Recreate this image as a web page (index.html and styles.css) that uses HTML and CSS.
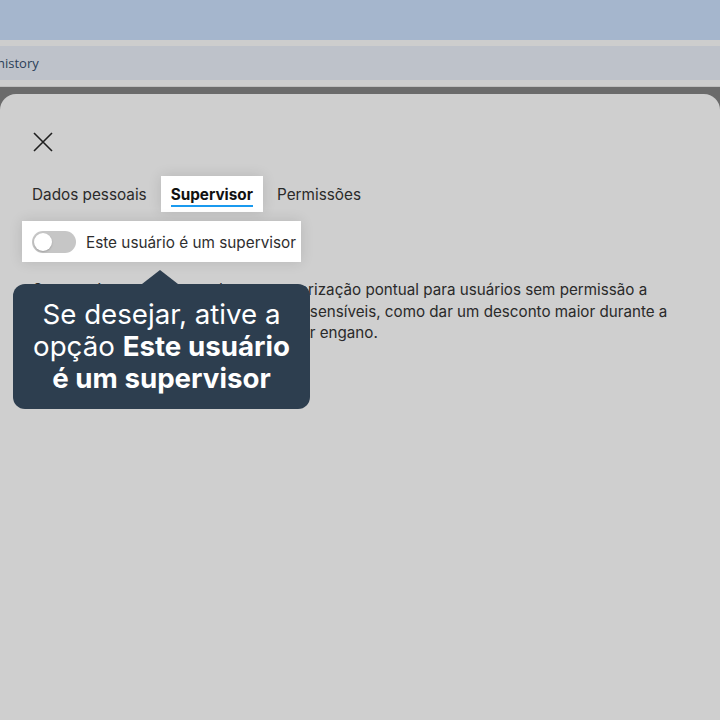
FILE: index.html
```html
<!DOCTYPE html>
<html lang="pt-BR">
<head>
    <meta charset="UTF-8">
    <meta name="viewport" content="width=device-width, initial-scale=1.0">
    <title>Usuário - Supervisor</title>
    <link rel="stylesheet" href="styles.css">
</head>
<body>
    <div class="browser-top"></div>
    <div class="address-bar">
        <span class="crumb">history</span>
    </div>

    <div class="backdrop">
        <div class="modal">
            <button class="close-btn" aria-label="Fechar">
                <svg width="20" height="20" viewBox="0 0 20 20">
                    <path d="M1 1 L19 19 M19 1 L1 19" stroke="#1f1f1f" stroke-width="1.6" fill="none"/>
                </svg>
            </button>

            <div class="tabs">
                <div class="tab">Dados pessoais</div>
                <div class="tab active"><span>Supervisor</span></div>
                <div class="tab">Permissões</div>
            </div>

            <div class="supervisor-row">
                <label class="switch">
                    <span class="knob"></span>
                </label>
                <span class="switch-label">Este usuário é um supervisor</span>
            </div>

            <p class="help-text">
                O supervisor pode conceder uma autorização pontual para usuários sem permissão a<br>
                realizar determinadas operações mais sensíveis, como dar um desconto maior durante a<br>
                venda ou cancelar um item lançado por engano.
            </p>

            <!-- tour hint pointing at the switch -->
            <div class="tour-tip">
                Se desejar, ative a<br>
                opção <strong>Este usuário</strong><br>
                <strong>é um supervisor</strong>
            </div>
        </div>
    </div>
</body>
</html>
```

FILE: styles.css
```css
* {
    box-sizing: border-box;
}

body {
    margin: 0;
    height: 720px;
    overflow: hidden;
    font-family: Inter, "Noto Sans", Arial, sans-serif;
    background-color: #cfcfcf;
    display: flex;
    flex-direction: column;
}

.browser-top {
    height: 46px;
    background-color: #a5b6cd;
    border-bottom: 6px solid #cdcdcd;
    flex-shrink: 0;
}

.address-bar {
    height: 40px;
    background-color: #bec2ca;
    border-bottom: 6px solid #cdcdcd;
    display: flex;
    align-items: center;
    flex-shrink: 0;
    overflow: hidden;
}

.crumb {
    margin-left: -3px;
    font-family: "Open Sans", "Noto Sans", sans-serif;
    font-size: 13px;
    color: #2b4058;
}

.backdrop {
    flex: 1;
    background-color: #6b6b6b;
    border-top: 1px solid #bdbdbd;
    padding-top: 7px;
    display: flex;
}

.modal {
    position: relative;
    flex: 1;
    background-color: #cfcfcf;
    border-radius: 16px 16px 0 0;
    padding: 38px 32px 0 32px;
}

.close-btn {
    display: block;
    width: 20px;
    height: 20px;
    padding: 0;
    margin-left: 1px;
    border: none;
    background: none;
}

.close-btn svg {
    display: block;
}

.tabs {
    display: flex;
    gap: 4px;
    margin: 24px 0 0 -10px;
}

.tab {
    height: 36px;
    padding: 0 10px;
    display: flex;
    align-items: center;
    font-size: 15.3px;
    color: #2a2a2a;
}

.tab.active {
    background-color: #fff;
    font-weight: 700;
    color: #111;
    box-shadow: 0 0 14px rgba(0, 0, 0, 0.12);
}

.tab.active span {
    border-bottom: 2px solid #1a9aef;
    padding-bottom: 1px;
    margin-top: 3px;
}

.supervisor-row {
    display: inline-flex;
    align-items: center;
    gap: 10px;
    margin: 9px 0 0 -10px;
    padding: 10px 5px 9px 10px;
    background-color: #fff;
    box-shadow: 0 0 14px rgba(0, 0, 0, 0.12);
}

.switch {
    position: relative;
    width: 44px;
    height: 22px;
    border-radius: 11px;
    background-color: #c6c6c6;
}

.knob {
    position: absolute;
    top: 2px;
    left: 2px;
    width: 18px;
    height: 18px;
    border-radius: 50%;
    background-color: #fff;
    box-shadow: 0 1px 2px rgba(0, 0, 0, 0.2);
}

.switch-label {
    font-size: 15.3px;
    color: #2e2e2e;
}

.help-text {
    margin: 17px 0 0 0;
    white-space: nowrap;
    font-size: 15.2px;
    line-height: 21.5px;
    color: #2a2a2a;
}

.tour-tip {
    position: absolute;
    left: 13px;
    top: 190px;
    width: 297px;
    height: 125px;
    padding-top: 14px;
    background-color: #2d3e4f;
    border-radius: 12px;
    color: #fff;
    text-align: center;
    font-size: 27.7px;
    line-height: 32px;
    font-weight: 400;
}

.tour-tip strong {
    font-weight: 700;
}

.tour-tip::before {
    content: "";
    position: absolute;
    left: 129px;
    top: -14px;
    border-left: 18px solid transparent;
    border-right: 18px solid transparent;
    border-bottom: 14px solid #2d3e4f;
}
```
